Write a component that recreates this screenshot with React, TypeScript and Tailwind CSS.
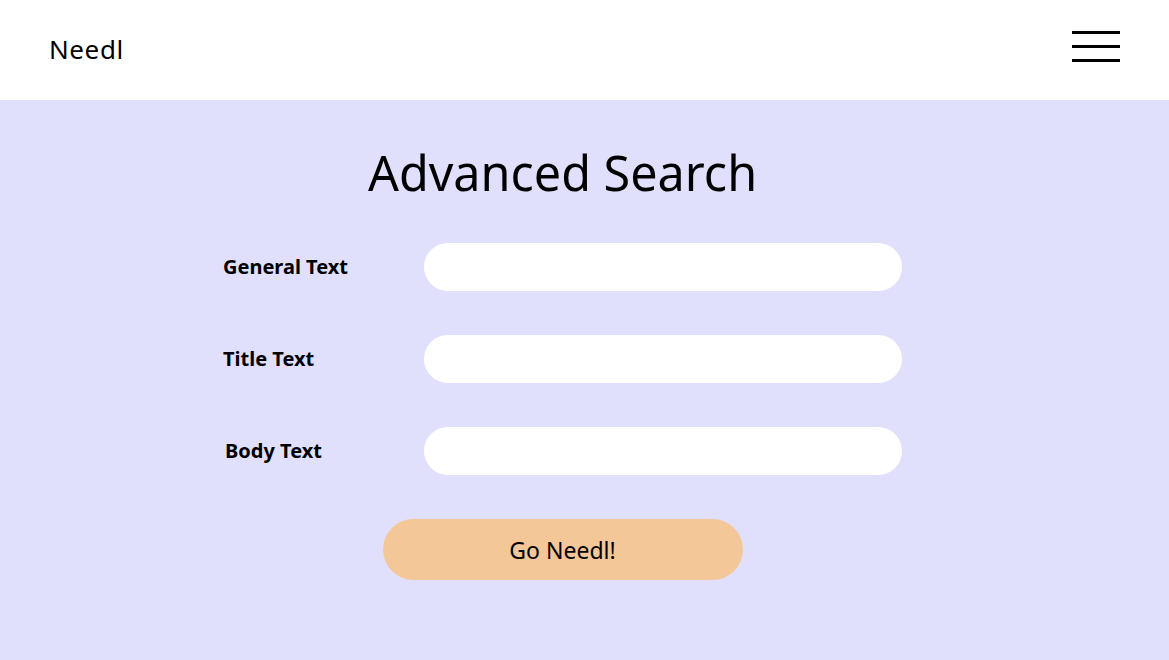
import React from 'react'

const fields = ['General Text', 'Title Text', 'Body Text']

export default function App() {
  return (
    <div className="min-h-[660px] flex flex-col bg-[#e0e0fd] font-['Noto_Sans',sans-serif] text-black">
      {/* Header */}
      <header className="h-[100px] bg-white flex items-center justify-between pl-[49px] pr-[49px]">
        <span className="text-[26px] leading-none tracking-[0.6px] -mt-[2px]">Needl</span>
        <button aria-label="Menu" className="w-[48px] flex flex-col gap-[11px] -mt-[8px]">
          <span className="block h-[3px] bg-black" />
          <span className="block h-[3px] bg-black" />
          <span className="block h-[3px] bg-black" />
        </button>
      </header>

      {/* Form */}
      <main className="flex-1 pl-[223px]">
        <div className="w-[679px] flex flex-col pt-[42px]">
          <h1 className="text-center text-[48.5px] leading-[60px]">Advanced Search</h1>
          <div className="mt-[41px] flex flex-col gap-[44px]">
            {fields.map((f, i) => (
              <div key={f} className="flex items-center justify-between">
                <label className={`text-[20px] font-bold ${i === 2 ? 'pl-[2px]' : ''}`}>{f}</label>
                <input className="w-[478px] h-[48px] rounded-full bg-white outline-none px-6" />
              </div>
            ))}
          </div>
          <div className="flex justify-center mt-[44px]">
            <button className="w-[360px] h-[61px] rounded-full bg-[#f4c799] text-[23px] pt-[2px]">Go Needl!</button>
          </div>
        </div>
      </main>
    </div>
  )
}
